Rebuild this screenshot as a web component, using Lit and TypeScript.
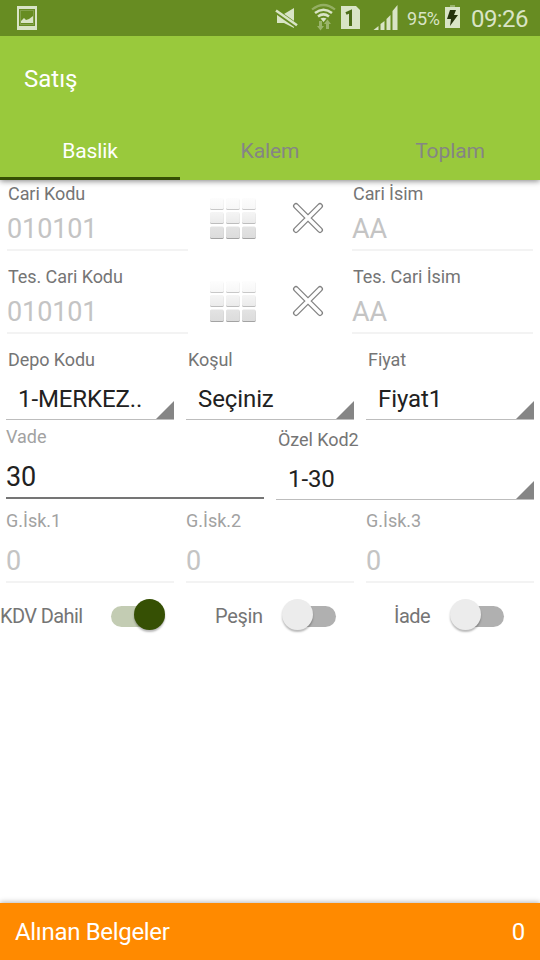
import { LitElement, html, css, svg } from "lit";
import { customElement, property, state } from "lit/decorators.js";
import { classMap } from "lit/directives/class-map.js";

@customElement("status-bar")
class StatusBar extends LitElement {
  static styles = css`
    :host { display: flex; height: 36px; background: #678c22; color: #d9e4c6; position: relative; z-index: 1; }
    svg { display: block; flex: none; height: 36px; }
    .spacer { flex: 1; }
    .battery { width: 35px; font-size: 18px; line-height: 38px; letter-spacing: -0.2px; white-space: nowrap; }
    .clock { width: 69px; font-size: 24px; line-height: 38px; letter-spacing: -0.6px; white-space: nowrap; }
  `;
  render() {
    return html`
      <svg width="54" viewBox="0 0 54 36" fill="#d9e4c6">
        <path fill-rule="evenodd" d="M17 6h20v24H17zM19 9v17h16V9z" />
        <path d="M20 10h14v15H20zM21 11v13h12V11z" fill-rule="evenodd" opacity=".25" />
        <path d="M21 23v-2l3-3 2 2 3-1 4-3v7z" />
      </svg>
      <div class="spacer"></div>
      <svg width="40" viewBox="270 0 40 36" fill="#d9e4c6">
        <path d="M277 14h7l10-6v20l-10-5h-7z" />
        <path d="M275 10.500l22 15.500" stroke="#678c22" stroke-width="5" />
        <path d="M276 10.500l21 14.700" stroke="#d9e4c6" stroke-width="2.600" />
      </svg>
      <svg width="30" viewBox="310 0 30 36" fill="none" stroke="#d9e4c6">
        <path d="M312 9.500q11.500-9 23 0" stroke-width="2.200" opacity=".4" />
        <path d="M315 13q8.500-6.500 17 0" stroke-width="2.500" />
        <path d="M318 16.500q5.500-4.200 11 0" stroke-width="2.500" />
        <path d="M320.500 18.600q3-1.800 6 0l-3 3.400z" fill="#d9e4c6" stroke="none" />
        <path d="M319 21h3v5h2l-3.500 4.500L317 26h2zM326 29v-5h-2l3.500-4.500L331 24h-2v5z" fill="#d9e4c6" stroke="none" opacity=".45" />
      </svg>
      <svg width="30" viewBox="340 0 30 36">
        <path fill="#d9e4c6" d="M341 6h15l4 4v19h-19z" />
        <path fill="none" stroke="#4b6c18" stroke-width="3" d="M346 13.500l4.500-2v14.500" />
      </svg>
      <svg width="37" viewBox="370 0 37 36" fill="#d9e4c6">
        <path d="M373 30l5-4v4zM380 24l4-3v9h-4zM386 19l4-4v15h-4zM392 11l5-6v25h-5z" transform="translate(.5 0)" />
      </svg>
      <div class="battery">95%</div>
      <svg width="29" viewBox="442 0 29 36">
        <path fill="#d9e4c6" d="M445 7h15v21h-15z" />
        <path fill="#d9e4c6" opacity=".45" d="M450 5h5v2h-5z" />
        <path fill="#24320c" d="M450 10h6l-2 5h4l-8 11 1-7h-4z" />
      </svg>
      <div class="clock">09:26</div>
    `;
  }
}

@customElement("text-field")
class TextField extends LitElement {
  @property() label = "";
  @property() value = "";
  @property({ type: Boolean, reflect: true }) floating = false;
  @property({ type: Boolean, reflect: true }) active = false;
  static styles = css`
    :host { display: flex; flex-direction: column; }
    .label { height: 21px; line-height: 21px; font-size: 18px; letter-spacing: -0.07px; color: #757575; padding-left: 1px; white-space: nowrap; }
    .value { height: 40px; line-height: 41px; padding-top: 5px; font-size: 27px; letter-spacing: -0.1px; color: #c4c4c4; border-bottom: 2px solid #f3f3f3; white-space: nowrap; }
    :host([floating]) .label { color: #a2a2a2; padding-left: 0; letter-spacing: 0; }
    :host([floating]) .value { padding-top: 10px; }
    :host([active]) .value { color: #212121; border-color: #757575; }
  `;
  render() {
    return html`<div class="label">${this.label}</div><div class="value">${this.value}</div>`;
  }
}

@customElement("spinner-field")
class SpinnerField extends LitElement {
  @property() label = "";
  @property() value = "";
  static styles = css`
    :host { display: flex; flex-direction: column; }
    .label { height: 22px; line-height: 22px; font-size: 18px; letter-spacing: -0.07px; color: #757575; padding-left: 2px; white-space: nowrap; }
    .box { display: flex; justify-content: space-between; align-items: flex-end; height: 48px; border-bottom: 1px solid #bdbdbd; }
    .value { line-height: 39px; font-size: 24px; letter-spacing: -0.1px; color: #212121; padding-left: 12px; white-space: nowrap; }
    svg { display: block; }
  `;
  render() {
    return html`
      <div class="label">${this.label}</div>
      <div class="box">
        <span class="value">${this.value}</span>
        <svg width="18" height="18"><path d="M18 0v18H0z" fill="#858585" /></svg>
      </div>
    `;
  }
}

@customElement("toggle-switch")
class ToggleSwitch extends LitElement {
  @property({ type: Boolean }) on = false;
  static styles = css`
    :host { display: block; }
    .track { display: flex; align-items: center; width: 54px; height: 21px; border-radius: 11px; background: #b0b0b0; }
    .thumb { width: 31px; height: 31px; margin: -4px 0 0 0; border-radius: 50%; background: #ececec; box-shadow: 0 2px 2px rgba(0, 0, 0, 0.28); flex: none; }
    .off { background: linear-gradient(90deg, transparent 12px, #b0b0b0 12px); }
    .on { justify-content: flex-end; background: #c3ccb3; }
    .on .thumb { background: #365004; }
  `;
  render() {
    return html`<div class=${classMap({ track: true, on: this.on, off: !this.on })}><div class="thumb"></div></div>`;
  }
}

@customElement("account-row")
class AccountRow extends LitElement {
  @property() codeLabel = "";
  @property() code = "";
  @property() nameLabel = "";
  @property() name = "";
  static styles = css`
    :host { display: grid; grid-template-columns: 181px 90px 60px 195px; padding: 3px 7px 0; height: 80px; align-items: start; }
    svg { display: block; }
    .grid { margin: 15px 0 0 21px; }
    .cross { margin: 19px 0 0 14px; }
    .last { margin-left: 14px; width: 181px; }
  `;
  render() {
    const rows = [
      { y: 0, h: 11, fill: "url(#top)", edge: "#c8c8c8" },
      { y: 14, h: 11, fill: "url(#mid)", edge: "#bdbdbd" },
      { y: 28.5, h: 11.5, fill: "url(#low)", edge: "#a3a3a3" },
    ];
    const arms = "M4 4L28 28M28 4L4 28";
    return html`
      <text-field label=${this.codeLabel} value=${this.code}></text-field>
      <svg class="grid" width="48" height="42">
        <defs>
          <linearGradient id="top" x2="0" y2="1"><stop stop-color="#fdfdfd" /><stop offset="1" stop-color="#f7f7f7" /></linearGradient>
          <linearGradient id="mid" x2="0" y2="1"><stop stop-color="#f5f5f5" /><stop offset="1" stop-color="#ebebeb" /></linearGradient>
          <linearGradient id="low" x2="0" y2="1"><stop stop-color="#e3e3e3" /><stop offset="1" stop-color="#dcdcdc" /></linearGradient>
        </defs>
        ${rows.map((r) =>
          [1, 17, 33].map(
            (x) => svg`
              <rect x=${x + 0.1} y=${r.y + 1} width="13.600" height=${r.h} rx="1.500" fill=${r.edge} />
              <rect x=${x} y=${r.y} width="13.800" height=${r.h} rx="1.500" fill=${r.fill} />`
          )
        )}
      </svg>
      <svg class="cross" width="34" height="34" stroke-linecap="round">
        <path d=${arms} stroke="#828282" stroke-width="6" />
        <path d=${arms} stroke="#fff" stroke-width="3.400" />
      </svg>
      <text-field class="last" label=${this.nameLabel} value=${this.name}></text-field>
    `;
  }
}

@customElement("app-root")
class AppRoot extends LitElement {
  @state() tabs = ["Baslik", "Kalem", "Toplam"];
  static styles = css`
    :host { display: flex; flex-direction: column; height: 960px; background: #fff; font-family: Roboto, "Noto Sans", sans-serif; overflow: hidden; }
    .appbar { height: 144px; background: #99c93c; box-shadow: 0 1px 6px rgba(0, 0, 0, 0.5); color: #fff; }
    .title { height: 84px; line-height: 86px; padding-left: 24px; font-size: 24px; }
    .tabs { display: grid; grid-template-columns: repeat(3, 1fr); }
    .tab { height: 57px; line-height: 63px; text-align: center; font-size: 21px; letter-spacing: -0.1px; color: #858585; border-bottom: 3px solid transparent; }
    .selected { color: #fff; border-color: #365004; }
    .form { flex: 1; }
    .three { display: grid; grid-template-columns: repeat(3, 168px); gap: 12px; padding: 3px 6px 0; }
    .two { display: grid; grid-template-columns: repeat(2, 258px); gap: 12px; padding: 6px 6px 0; }
    .lowered { margin-top: 3px; }
    .discounts { padding-top: 10px; }
    .switches { display: flex; height: 67px; align-items: center; font-size: 20px; color: #757575; white-space: nowrap; }
    .switches span { margin-top: -2px; }
    .kdv { width: 111px; letter-spacing: -0.6px; }
    .cash { width: 67px; margin-left: 50px; letter-spacing: -0.3px; }
    .refund { width: 56px; margin-left: 58px; letter-spacing: -0.5px; }
    .footer { display: flex; justify-content: space-between; height: 57px; padding: 0 15px; line-height: 58px; font-size: 24px; letter-spacing: -0.32px; color: #fff; background: #ff8a00; box-shadow: 0 -1px 5px rgba(0, 0, 0, 0.28); }
  `;
  render() {
    return html`
      <status-bar></status-bar>
      <div class="appbar">
        <div class="title">Satış</div>
        <div class="tabs">
          ${this.tabs.map((t, i) => html`<div class=${classMap({ tab: true, selected: i === 0 })}>${t}</div>`)}
        </div>
      </div>
      <div class="form">
        <account-row .codeLabel=${"Cari Kodu"} .code=${"010101"} .nameLabel=${"Cari İsim"} .name=${"AA"}></account-row>
        <account-row .codeLabel=${"Tes. Cari Kodu"} .code=${"010101"} .nameLabel=${"Tes. Cari İsim"} .name=${"AA"}></account-row>
        <div class="three">
          <spinner-field label="Depo Kodu" value="1-MERKEZ.."></spinner-field>
          <spinner-field label="Koşul" value="Seçiniz"></spinner-field>
          <spinner-field label="Fiyat" value="Fiyat1"></spinner-field>
        </div>
        <div class="two">
          <text-field floating active label="Vade" value="30"></text-field>
          <spinner-field class="lowered" label="Özel Kod2" value="1-30"></spinner-field>
        </div>
        <div class="three discounts">
          ${[1, 2, 3].map((n) => html`<text-field floating label=${`G.İsk.${n}`} value="0"></text-field>`)}
        </div>
        <div class="switches">
          <span class="kdv">KDV Dahil</span><toggle-switch on></toggle-switch>
          <span class="cash">Peşin</span><toggle-switch></toggle-switch>
          <span class="refund">İade</span><toggle-switch></toggle-switch>
        </div>
      </div>
      <div class="footer"><span>Alınan Belgeler</span><span>0</span></div>
    `;
  }
}
